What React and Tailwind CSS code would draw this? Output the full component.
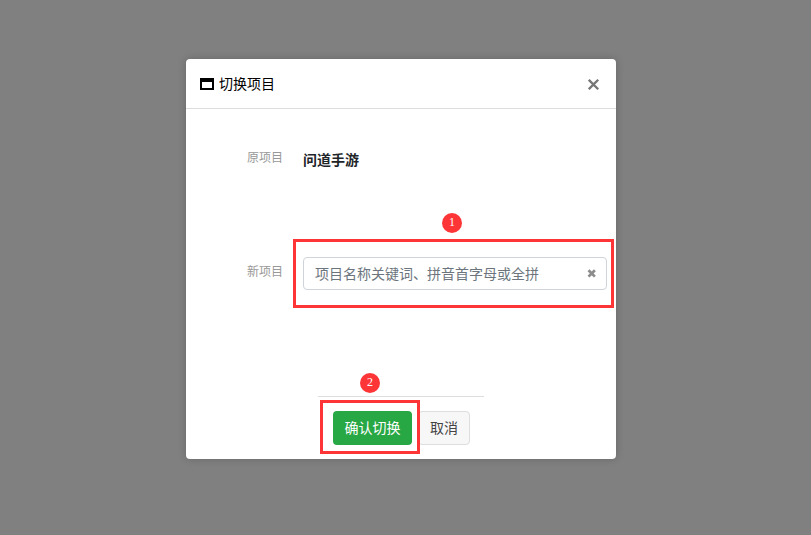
import React, { useState } from 'react';

const WindowIcon = () => (
    <svg width="14" height="12" viewBox="0 0 14 12" aria-hidden="true" shapeRendering="crispEdges">
        <path fill="#000" fillRule="evenodd" d="M0 0h14v12H0zM2 4v6h10V4z" />
    </svg>
);

const CloseIcon = () => (
    <svg width="12" height="12" viewBox="0 0 12 12" aria-hidden="true">
        <path d="M0.8 1.8l9.4 9.4M10.2 1.8l-9.4 9.4" stroke="#777" strokeWidth="2.3" fill="none" />
    </svg>
);

const ClearIcon = () => (
    <svg width="10" height="10" viewBox="0 0 10 10" aria-hidden="true">
        <path d="M1.5 1.2l6.4 6.4M7.9 1.2l-6.4 6.4" stroke="#8c8c8c" strokeWidth="2.7" fill="none" />
    </svg>
);

const StepBadge = ({ number, className }) => (
    <span
        className={`absolute flex h-5 w-5 items-center justify-center rounded-full bg-[#fd3537] pb-0.5 font-['Liberation_Serif',serif] text-xs leading-none text-white ${className}`}
    >
        {number}
    </span>
);

const App = () => {
    const [keyword, setKeyword] = useState('');

    const handleSubmit = (e) => {
        e.preventDefault();
    };

    return (
        <div className="flex min-h-screen items-start justify-center bg-[#808080] pt-[59px] pr-[9px] pb-8 font-['Liberation_Sans','Noto_Sans_CJK_SC',sans-serif] text-sm leading-5">
            <div
                role="dialog"
                aria-labelledby="dialog-title"
                className="w-full max-w-[430px] rounded bg-white shadow-[0_0_8px_rgba(0,0,0,0.2)]"
            >
                {/* Header */}
                <div className="flex h-[50px] items-center border-b border-[#dddddd] pt-px pr-4 pl-[14px]">
                    <WindowIcon />
                    <h1 id="dialog-title" className="ml-[5px] text-sm text-black">切换项目</h1>
                    <button type="button" aria-label="关闭" className="ml-auto">
                        <CloseIcon />
                    </button>
                </div>

                <form onSubmit={handleSubmit}>
                    {/* Current project */}
                    <div className="flex gap-5 pt-[39px] pr-[9px]">
                        <span className="w-[97px] shrink-0 text-right text-xs leading-5 text-[#999999]">原项目</span>
                        <strong className="pt-0.5 font-bold text-[#212529]">问道手游</strong>
                    </div>

                    {/* New project */}
                    <div className="mt-[87px] flex gap-5 pr-[9px]">
                        <label htmlFor="project" className="w-[97px] shrink-0 pt-[5px] text-right text-xs leading-5 text-[#999999]">
                            新项目
                        </label>
                        <div className="relative min-w-0 flex-1">
                            <input
                                id="project"
                                type="text"
                                value={keyword}
                                onChange={(e) => setKeyword(e.target.value)}
                                placeholder="项目名称关键词、拼音首字母或全拼"
                                className="block h-[33px] w-full rounded border border-[#ced4da] bg-white pr-8 pl-[11px] text-sm text-[#495057] placeholder:text-[#6c757d] focus:outline-none"
                            />
                            <button
                                type="button"
                                aria-label="清除"
                                onClick={() => setKeyword('')}
                                className="absolute inset-y-0 right-[10px] flex items-center"
                            >
                                <ClearIcon />
                            </button>
                            <span className="pointer-events-none absolute -top-[18px] -right-[7px] -bottom-[18px] -left-[10px] border-3 border-[#fd3537]" />
                            <StepBadge number={1} className="-top-11 left-[139px]" />
                        </div>
                    </div>

                    {/* Actions */}
                    <div className="mx-auto mt-[106px] flex w-fit gap-[6px] border-t border-[#dddddd] pt-[14px] pr-[14px] pb-[14px] pl-[15px]">
                        <div className="relative z-10">
                            <button type="submit" className="h-[34px] w-[79px] rounded bg-[#28a745] text-sm text-white">
                                确认切换
                            </button>
                            <span className="pointer-events-none absolute -top-[11px] -right-2 -bottom-[9px] -left-[13px] border-3 border-[#fd3537]" />
                            <StepBadge number={2} className="-top-[38px] left-[27px]" />
                        </div>
                        <button
                            type="button"
                            className="h-[34px] w-[52px] rounded border border-[#dddddd] bg-[#f7f7f7] text-sm text-[#444444]"
                        >
                            取消
                        </button>
                    </div>
                </form>
            </div>
        </div>
    );
};

export default App;
